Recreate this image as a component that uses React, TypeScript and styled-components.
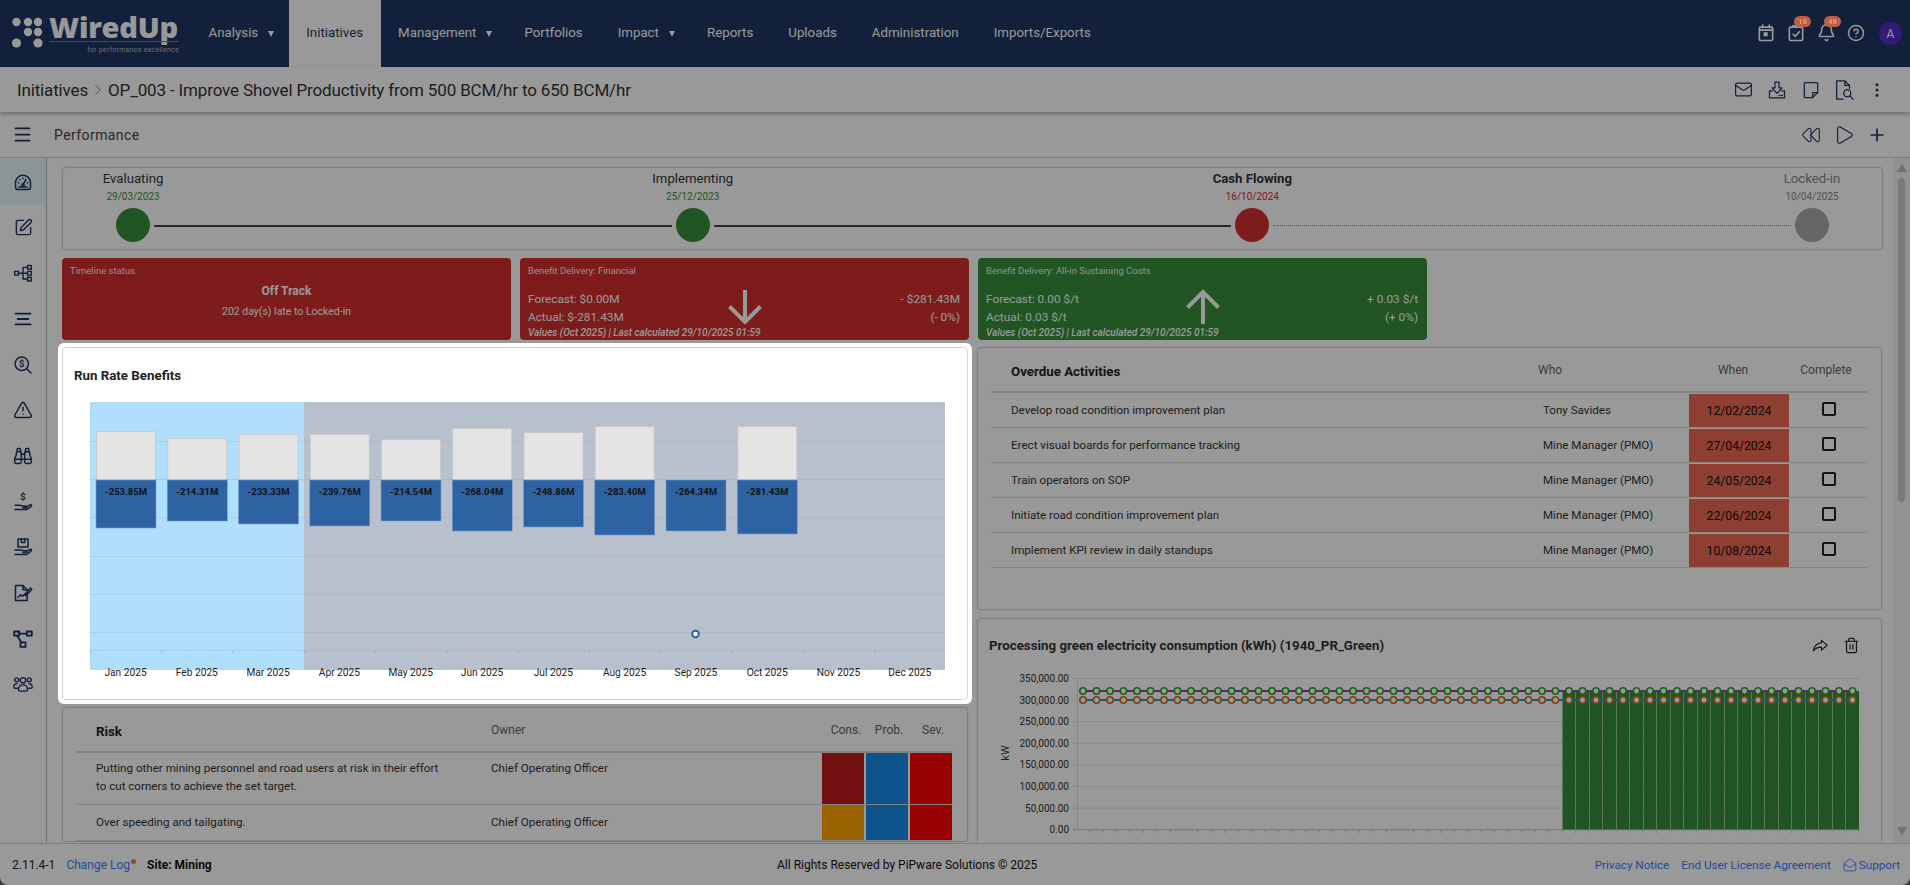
import React from 'react';
import styled, { createGlobalStyle } from 'styled-components';
import { Mail, EllipsisVertical, Rewind, Play, Plus, Trash2, MailOpen, Bell, CircleHelp, SquarePen, TriangleAlert, Binoculars, ChevronRight, Menu } from 'lucide-react';

const GlobalStyle = createGlobalStyle`
  html, body { margin: 0; padding: 0; height: 100%; background: #666; overflow: hidden; }
  body { font-family: Roboto, "Liberation Sans", sans-serif; font-size: 12px; color: #333; }
  #root { height: 100%; }
`;

const Page = styled.div`
  height: 885px; width: 1910px; display: flex; flex-direction: column; background: #fff;
  border-radius: 0 0 8px 8px; overflow: hidden;
`;
const Backdrop = styled.div`
  position: fixed; inset: 0; background: rgba(0, 0, 0, 0.4); z-index: 10;
`;

/* ---------- top navigation ---------- */
const Nav = styled.header`
  height: 67px; flex: none; display: flex; align-items: stretch; background: #1f3663;
`;
const Logo = styled.div`
  width: 191px; flex: none; display: flex; padding: 13px 0 0 11px; box-sizing: border-box; color: #fff;
`;
const LogoWords = styled.div`
  display: flex; flex-direction: column; align-items: flex-end; width: 130px; margin-left: 1px;
`;
const LogoWord = styled.div`
  font-family: "Open Sans", sans-serif; font-weight: 800; font-size: 29px; line-height: 27px; width: 100%; white-space: nowrap; letter-spacing: -.2px;
`;
const LogoRule = styled.div`
  width: 100%; height: 1px; background: #6d7fa3; margin-top: 1px;
`;
const LogoTag = styled.div`
  font-size: 7px; line-height: 9px; margin-top: 4px; color: #b6bccb; white-space: nowrap; letter-spacing: .25px;
`;
const NavItem = styled.div<{ $active?: boolean }>`
  display: flex; align-items: center; gap: 8px; padding: 0 17.5px 2px; font-size: 13.3px;
  background: ${p => (p.$active ? '#fff' : 'transparent')};
  color: ${p => (p.$active ? '#1f3663' : '#fff')};
`;
const Caret = styled.span`
  width: 0; height: 0; border-left: 3.5px solid transparent; border-right: 3.5px solid transparent; border-top: 6px solid #fff; margin: 2px -3px 0 2px;
`;
const NavRight = styled.div`
  margin-left: auto; display: flex; align-items: center; padding-right: 8px; color: #fff;
`;
const NavIconBox = styled.div`
  position: relative; width: 30px; height: 30px; display: flex; align-items: center; justify-content: center; margin-bottom: 2px;
`;
const Badge = styled.span`
  position: absolute; top: -2px; left: 13px; min-width: 17px; height: 11px; border-radius: 6px; background: #bd5f43; color: #e6b5a0;
  font-size: 8px; line-height: 11px; text-align: center; z-index: 20;
`;
const Avatar = styled.div`
  width: 23px; height: 23px; border-radius: 50%; background: #5a2bcc; color: #fff; font-size: 12px; display: flex; align-items: center; justify-content: center; margin-left: 8px; 
`;

/* ---------- title & tool bars ---------- */
const TitleBar = styled.div`
  height: 45px; flex: none; display: flex; align-items: center; padding: 0 16px 0 17px; font-size: 17px; color: #333;
  background: #fff; box-shadow: 0 2px 4px rgba(0,0,0,.3); position: relative;
`;
const Crumb = styled.span`
  display: flex; align-items: center; white-space: nowrap; letter-spacing: -.15px;
`;
const Sep = styled.span`
  display: flex; margin: 0 1px; color: #777;
`;
const IconGroup = styled.div`
  margin-left: auto; display: flex; align-items: center; color: #1f3663;
`;
const IconBox = styled.div`
  width: 33.4px; display: flex; align-items: center; justify-content: center;
`;
const ToolBar = styled.div`
  height: 46px; flex: none; display: flex; align-items: center; padding: 0 16px 0 0; box-sizing: border-box; border-bottom: 1px solid #ccc; color: #1f3663;
`;
const Burger = styled.div`
  width: 44px; flex: none; display: flex; justify-content: center; 
`;
const ToolTitle = styled.div`
  font-size: 14px; margin-left: 10px; color: #444; letter-spacing: .03em;
`;

/* ---------- body ---------- */
const Body = styled.div`
  flex: 1; min-height: 0; display: flex;
`;
const Sidebar = styled.nav`
  width: 46px; flex: none; border-right: 1px solid #bbb; padding-top: 1px; color: #1f3663;
`;
const SideItem = styled.div<{ $active?: boolean }>`
  height: 45.7px; display: flex; align-items: center; justify-content: center;
  background: ${p => (p.$active ? '#e6fafa' : 'transparent')};
`;
const Scroll = styled.main`
  flex: 1; min-width: 0; overflow: hidden; padding: 9px 10px 0 15px;
`;
const Card = styled.section`
  background: #fff; border: 1px solid #d6d6d6; border-radius: 4px; box-sizing: border-box; box-shadow: 0 0 2px rgba(0,0,0,.12);
`;
const StepperCard = styled(Card)`
  height: 83px; padding: 3px 53px 0; display: flex;
`;
const Step = styled.div`
  width: 34px; flex: none; display: flex; flex-direction: column; align-items: center;
`;
const StepLabel = styled.div<{ $tone: 'normal' | 'strong' | 'muted' }>`
  font-size: 13.2px; line-height: 16px; white-space: nowrap;
  font-weight: ${p => (p.$tone === 'strong' ? 700 : 400)};
  color: ${p => (p.$tone === 'muted' ? '#888' : '#333')};
`;
const StepDate = styled.div<{ $color: string }>`
  font-size: 10px; line-height: 14px; margin-top: 3px; white-space: nowrap; color: ${p => p.$color};
`;
const StepDot = styled.div<{ $color: string }>`
  width: 34px; height: 34px; border-radius: 50%; margin-top: 4px; flex: none; background: ${p => p.$color};
`;
const Connector = styled.div<{ $pending?: boolean }>`
  flex: 1; align-self: flex-start; margin: 54px 4px 0;
  border-top: ${p => (p.$pending ? '1px dotted #888' : '2px solid #444')};
`;
const Columns = styled.div`
  display: grid; grid-template-columns: 906px 905px; column-gap: 9px; margin-top: 7px;
`;
const Column = styled.div<{ $gap: number }>`
  display: flex; flex-direction: column; gap: ${p => p.$gap}px; min-width: 0;
`;
const StatusRow = styled.div`
  display: grid; grid-template-columns: repeat(3, 449px); column-gap: 9px; height: 82px; margin-top: 8px;
`;
const Status = styled.div<{ $bg: string }>`
  position: relative; border-radius: 4px; background: ${p => p.$bg}; color: #fff; height: 82px; padding: 6px 8px 0; box-sizing: border-box; display: flex; flex-direction: column;
`;
const StatusTitle = styled.div`
  font-size: 9.5px; line-height: 12px; margin-top: 1px; color: #eee;
`;
const StatusBig = styled.div`
  font-size: 12px; line-height: 18px; font-weight: 700; text-align: center; margin-top: 5px;
`;
const StatusText = styled.div`
  font-size: 10.5px; line-height: 18px; text-align: center; margin-top: 3px;
`;
const Metrics = styled.div`
  display: flex; justify-content: space-between; margin-top: 13px; font-size: 11.8px; line-height: 18px; padding-right: 1px;
`;
const MetricRight = styled.div`
  text-align: right; 
`;
const StatusArrow = styled.div`
  position: absolute; left: 50%; top: 31px; transform: translateX(-50%); display: flex;
`;
const StatusNote = styled.div`
  font-size: 10px; line-height: 12px; font-style: italic; font-weight: 500; margin-top: 1px; 
`;

/* highlighted card */
const Spotlight = styled.div`
  position: relative; z-index: 20; margin: -4px; padding: 4px; background: #fff; border-radius: 6px;
`;
const ChartCard = styled(Card)`
  padding: 20px 0 4px; box-shadow: none; 
`;
const ChartTitle = styled.h3`
  margin: 0; padding-left: 11px; font-size: 13.3px; line-height: 16px; font-weight: 700; color: #222;
`;
const ChartSvg = styled.svg`
  display: block; margin-top: 11px; font-family: Roboto, sans-serif;
`;

/* tables */
const TableRow = styled.div<{ $cols: string; $h: number; $head?: boolean }>`
  display: grid; grid-template-columns: ${p => p.$cols}; height: ${p => p.$h}px; box-sizing: border-box;
  border-bottom: ${p => (p.$head ? '2px solid #ddd' : '1px solid #ddd')}; font-size: 11.6px;
`;
const TableCard = styled(Card)<{ $pb: number }>`
  padding: 0 14px ${p => p.$pb}px 13px;
`;
const Cell = styled.div<{ $pl?: number; $pt?: number }>`
  padding-left: ${p => p.$pl ?? 20}px; padding-top: ${p => p.$pt ?? 0}px; line-height: 18px; color: #333; min-width: 0;
`;
const RowCell = styled(Cell)`
  display: flex; align-items: center; white-space: nowrap;
`;
const HeadTitle = styled.div`
  padding: 3px 0 0 20px; display: flex; align-items: center; font-size: 13.3px; font-weight: 700; color: #222;
`;
const HeadCell = styled.div<{ $pl?: number; $center?: boolean; $dx?: number }>`
  display: flex; align-items: center; font-size: 12px; color: #666; padding-left: ${p => p.$pl ?? 0}px;
  justify-content: ${p => (p.$center ? 'center' : 'flex-start')};
  transform: translateX(${p => p.$dx ?? 0}px);
`;
const WhenCell = styled.div`
  background: #ed6a52; color: #111; display: flex; align-items: center; justify-content: center; margin-top: 1px; font-size: 12.2px;
`;
const CheckCell = styled.div`
  display: flex; align-items: center; justify-content: center; padding-left: 2px; padding-bottom: 2px;
`;
const Check = styled.span`
  width: 10px; height: 10px; border: 2px solid #222; border-radius: 2px; display: block;
`;
const RiskColor = styled.div<{ $bg: string }>`
  background: ${p => p.$bg}; margin: 0 1px; 
`;
const ProcessCard = styled(Card)`
  padding-top: 19px; height: 300px; overflow: hidden;
`;
const ProcessHead = styled.div`
  display: flex; align-items: center; justify-content: space-between; padding: 0 21px 0 11px; height: 16px;
`;
const ProcessTitle = styled.h3`
  margin: 0; font-size: 13.3px; line-height: 16px; font-weight: 700; color: #333;
`;
const ProcessActions = styled.div`
  display: flex; gap: 14px; color: #222;
`;
const ProcessSvg = styled.svg`
  display: block; margin-top: 6px; font-family: Roboto, sans-serif;
`;

/* scrollbar */
const ScrollRail = styled.div`
  width: 17px; flex: none; display: flex; flex-direction: column; align-items: center; background: #f4f4f4; padding: 6px 0 6px;
  box-sizing: border-box;
`;
const RailUp = styled.span`
  border-left: 5px solid transparent; border-right: 5px solid transparent; border-bottom: 8px solid #bbb; 
`;
const RailDown = styled.span`
  border-left: 5px solid transparent; border-right: 5px solid transparent; border-top: 8px solid #bbb; margin-top: auto; margin-bottom: 2px;
`;
const RailThumb = styled.div`
  width: 7px; height: 324px; margin-top: 6px; border-radius: 4px; background: #ccc;
`;

/* footer */
const Footer = styled.footer`
  height: 42px; flex: none; display: flex; align-items: center; border-top: 1px solid #d4d4d4; box-sizing: border-box; padding: 0 10px 0 12px; font-size: 12px; color: #111;
`;
const FooterLeft = styled.div`
  width: 765px; flex: none; display: flex; align-items: center; 
`;
const FooterRight = styled.div`
  margin-left: auto; display: flex; align-items: center; gap: 12px; font-size: 11.7px;
`;
const FootLink = styled.span`
  color: #3f7aff; display: inline-flex; align-items: center; gap: 2px; white-space: nowrap;
`;
const Version = styled.span`
  margin-right: 11px; color: #222;
`;
const Dot = styled.span`
  width: 5px; height: 5px; border-radius: 50%; background: #ff7a50; margin: -6px 11px 0 1px;
`;
const Site = styled.strong`
  font-weight: 700;
`;

/* ---------- icons ---------- */
const sv = { fill: 'none', stroke: 'currentColor', strokeLinecap: 'round' as const, strokeLinejoin: 'round' as const };
const S: React.FC<{ size?: number; w?: number; children: React.ReactNode }> = ({ size = 20, w = 1.8, children }) => (
  <svg width={size} height={size} viewBox="0 0 24 24" strokeWidth={w} {...sv}>{children}</svg>
);
const LogoMark = () => (
  <svg width="37" height="44" viewBox="0 0 37 44" style={{ flex: 'none' }} fill="#fff">
    {[[5.5, 9], [17, 9], [27, 9], [17, 19], [27, 19], [5.5, 30], [27, 30]].map(([cx, cy], i) => (
      <circle key={i} cx={cx} cy={cy} r={i === 5 || i === 6 ? 4.6 : 4.2} />
    ))}
  </svg>
);
const IconGauge = () => (
  <S><path d="M3 13a9 9 0 0 1 18 0v5a3 3 0 0 1-3 3H6a3 3 0 0 1-3-3z" /><path d="M12 15l3.5-6" /><circle cx="12" cy="15.5" r="1.4" /><path d="M6.5 13h.5M8 9.2h.3M12 7.5v.3M17.5 13h-.5M7 18h10" /></S>
);
const IconTree = () => (
  <S w={1.7}><rect x="2" y="10" width="4.5" height="4.5" /><rect x="17.5" y="3" width="4.5" height="4.5" /><rect x="17.5" y="10" width="4.5" height="4.5" /><rect x="17.5" y="17" width="4.5" height="4.5" /><path d="M6.5 12.2h11M12 5.2v14M12 5.2h5.5M12 19.2h5.5" /></S>
);
const IconLines = () => (
  <S w={2.2}><path d="M3 5.5h18M5.5 12h13M3 18.5h18" /></S>
);
const IconSearchDollar = () => (
  <S><circle cx="10.5" cy="10.5" r="8" /><path d="M16.5 16.5l5 5" /><text x="10.5" y="14.5" textAnchor="middle" fontSize="11" fill="currentColor" stroke="none" fontWeight="700">$</text></S>
);
const IconHandCoin = () => (
  <S><text x="12" y="9" textAnchor="middle" fontSize="11" fill="currentColor" stroke="none" fontWeight="700">$</text><path d="M2.5 16h5.5c2 0 3 1 5 1h3c1.2 0 1.2 2 0 2h-4M16.5 17.5l4-2c1.6-.6 2.4 1 1 2l-5 3.5H2.5" /></S>
);
const IconHandBox = () => (
  <S><rect x="6" y="2.5" width="12" height="9.5" /><path d="M10 2.5v4h4v-4" /><path d="M2.5 15.5h5.5c2 0 3 1 5 1h3c1.2 0 1.2 2 0 2h-4M16.5 17l4-2c1.6-.6 2.4 1 1 2l-5 4H2.5" /></S>
);
const IconFileChart = () => (
  <S><path d="M17 12v9H3V3h9l5 5v1M12 3v5h5" /><path d="M6 17l3-3 2.5 2 3-3" /><path d="M14 14l7-8 1.5 1.5-7 8z" /></S>
);
const IconNodes = () => (
  <S w={2.2}><rect x="1.5" y="3" width="6" height="5" /><rect x="16.5" y="3" width="6" height="5" /><rect x="9" y="16" width="6" height="5.5" /><path d="M7.5 5.5h9M5 8l5 8" /></S>
);
const IconUsers = () => (
  <S w={1.7}><circle cx="12" cy="7.5" r="3.2" /><circle cx="4.5" cy="7" r="2.4" /><circle cx="19.5" cy="7" r="2.4" /><path d="M6.5 19c0-3.5 2-6 5.5-6s5.5 2.5 5.5 6c0 1-1 1.5-2 1.5h-7c-1 0-2-.5-2-1.5zM5 11.5c-2.5 0-4 1.5-4 4 0 .8.5 1.5 1.5 1.5H5M19 11.5c2.5 0 4 1.5 4 4 0 .8-.5 1.5-1.5 1.5H19" /></S>
);
const IconCalendar = () => (
  <S w={2}><rect x="4" y="5" width="16" height="16" rx="1.5" /><path d="M8 2.5v3M16 2.5v3M4 8.5h16" /><rect x="9" y="11" width="5" height="5" fill="currentColor" stroke="none" /></S>
);
const IconTaskList = () => (
  <S w={2}><rect x="4" y="5" width="16" height="16" rx="1.5" /><path d="M8.5 13.5l2.5 2.5 5-5.5" /><path d="M8 3.5h8" /></S>
);
const IconTray = () => (
  <S w={1.5}><path d="M9.5 2.5h5v7h3.5L12 16 6 9.5h3.5z" /><path d="M6.5 13H3v8.5h18V13h-3.5" /><path d="M14.5 18.5h1M17.5 18.5h1" /></S>
);
const IconNote = () => (
  <S w={1.5}><path d="M5 3h14a1 1 0 0 1 1 1v11l-6 6H5a1 1 0 0 1-1-1V4a1 1 0 0 1 1-1z" /><path d="M14 21v-6h6" /></S>
);
const IconFileFind = () => (
  <S size={22} w={1.4}><path d="M11 22H4V2h9l5 5v3M13 2v5h5" /><circle cx="15.5" cy="15.5" r="3.8" /><path d="M18.5 18.5l3.5 3.5" /></S>
);
const IconShare = () => (
  <S size={18} w={1.4}><path d="M14 4.5l7.5 6.5-7.5 6.5v-4c-5 0-8 1-11 5 1-6 4-10 11-11z" /></S>
);
const BigArrow: React.FC<{ up?: boolean }> = ({ up }) => (
  <svg width="36" height="36" viewBox="0 0 36 36" fill="none" stroke="#fff" strokeWidth="4" style={up ? { transform: 'rotate(180deg)' } : undefined}>
    <path d="M18 1v31M2.5 17.5L18 33 33.5 17.5" />
  </svg>
);

/* ---------- data ---------- */
const navItems: { label: string; caret?: boolean; active?: boolean }[] = [
  { label: 'Analysis', caret: true },
  { label: 'Initiatives', active: true },
  { label: 'Management', caret: true },
  { label: 'Portfolios' },
  { label: 'Impact', caret: true },
  { label: 'Reports' },
  { label: 'Uploads' },
  { label: 'Administration' },
  { label: 'Imports/Exports' },
];
const sideIcons: React.ReactNode[] = [
  <IconGauge />, <SquarePen size={19} strokeWidth={1.8} />, <IconTree />, <IconLines />, <IconSearchDollar />,
  <TriangleAlert size={20} strokeWidth={1.8} />, <Binoculars size={20} strokeWidth={1.8} />, <IconHandCoin />, <IconHandBox />, <IconFileChart />, <IconNodes />, <IconUsers />,
];
const months = ['Jan', 'Feb', 'Mar', 'Apr', 'May', 'Jun', 'Jul', 'Aug', 'Sep', 'Oct', 'Nov', 'Dec'];
const bars = [
  { top: 431, bottom: 528, label: '-253.85M' },
  { top: 438, bottom: 521, label: '-214.31M' },
  { top: 434, bottom: 524, label: '-233.33M' },
  { top: 434, bottom: 526, label: '-239.76M' },
  { top: 439, bottom: 521, label: '-214.54M' },
  { top: 428, bottom: 531, label: '-268.04M' },
  { top: 432, bottom: 527, label: '-248.86M' },
  { top: 426, bottom: 535, label: '-283.40M' },
  { top: 479, bottom: 531, label: '-264.34M' },
  { top: 426, bottom: 534, label: '-281.43M' },
];
const activities = [
  ['Develop road condition improvement plan', 'Tony Savides', '12/02/2024'],
  ['Erect visual boards for performance tracking', 'Mine Manager (PMO)', '27/04/2024'],
  ['Train operators on SOP', 'Mine Manager (PMO)', '24/05/2024'],
  ['Initiate road condition improvement plan', 'Mine Manager (PMO)', '22/06/2024'],
  ['Implement KPI review in daily standups', 'Mine Manager (PMO)', '10/08/2024'],
];
const ACT_COLS = '539px 159px 100px 78px';
const RISK_COLS = '408px 337px 44px 44px 44px';

const RunRateChart = () => {
  const grid = [441, 479, 517, 556, 594, 632, 650];
  return (
    <ChartSvg width="904" height="300" viewBox="63 395 904 300">
      <rect x="90" y="402" width="855" height="268" fill="#b9c0cd" />
      <rect x="90" y="402" width="214" height="268" fill="#b0dffd" />
      {grid.map(y => <line key={y} x1="87" x2="945" y1={y + 0.5} y2={y + 0.5} stroke="#7f93b3" strokeOpacity=".22" />)}
      {months.map((_, i) => <line key={i} x1={90.5 + i * 71.3} x2={90.5 + i * 71.3} y1="650" y2="654" stroke="#7f93b3" strokeOpacity=".35" />)}
      {bars.map((b, i) => {
        const x = 96 + i * 71.25;
        return (
          <g key={b.label}>
            {b.top < 479 && <rect x={x + 0.5} y={b.top + 0.5} width="59" height={479 - b.top} fill="#e4e4e4" stroke="#c9c9c9" />}
            <rect x={x} y="480" width="60" height={b.bottom - 480} fill="#2d63a3" stroke="#7e9fc6" strokeWidth=".6" />
            <text x={x + 30} y="494.5" textAnchor="middle" fontSize="9.5" fontWeight="700" fill="#111">{b.label}</text>
          </g>
        );
      })}
      <circle cx="695.5" cy="634" r="3.3" fill="#fff" stroke="#2d63a3" strokeWidth="2" />
      {months.map((m, i) => (
        <text key={m} x={125.5 + i * 71.3} y="676" textAnchor="middle" fontSize="10.2" fill="#222">{m} 2025</text>
      ))}
    </ChartSvg>
  );
};

const ProcessChart = () => {
  const ticks = ['350,000.00', '300,000.00', '250,000.00', '200,000.00', '150,000.00', '100,000.00', '50,000.00', '0.00'];
  const pts = Array.from({ length: 58 }, (_, i) => 1083 + i * 13.5);
  return (
    <ProcessSvg width="903" height="260" viewBox="978 660 903 260">
      {ticks.map((t, i) => {
        const y = 678.5 + i * 21.6;
        return (
          <g key={t}>
            <line x1="1073" x2="1860" y1={y} y2={y} stroke={i === 7 ? '#c4c4c4' : '#e4e4e4'} />
            <text x="1069" y={y + 3.5} textAnchor="end" fontSize="10" fill="#333">{t}</text>
          </g>
        );
      })}
      <line x1="1077.5" x2="1077.5" y1="678" y2="830" stroke="#e0e0e0" />
      <text transform="translate(1009 753) rotate(-90)" textAnchor="middle" fontSize="11" fill="#333">kW</text>
      {pts.map((x, i) => i >= 36 && <rect key={x} x={x - 6.5} y="691" width="13" height="138.5" fill="#388e40" />)}
      <line x1="1083" x2="1853" y1="691" y2="691" stroke="#a33cb4" strokeWidth="2" />
      <line x1="1083" x2="1853" y1="700" y2="700" stroke="#2f8fd8" strokeWidth="2" />
      {pts.map(x => <circle key={x} cx={x} cy="691" r="3.2" fill="#fff" stroke="#2ba52b" strokeWidth="1.6" />)}
      {pts.map(x => <circle key={x} cx={x} cy="700" r="3.2" fill="#fff" stroke="#d96a1a" strokeWidth="1.6" />)}
      {pts.map((x, i) => (
        <g key={x}>
          <line x1={x + 6.5} x2={x + 6.5} y1="829" y2="833" stroke="#ccc" />
          <text transform={`translate(${x + 3} 845) rotate(-55)`} textAnchor="end" fontSize="10" fill="#333">{months[i % 12]} 2021</text>
        </g>
      ))}
    </ProcessSvg>
  );
};

export default function App() {
  return (
    <>
      <GlobalStyle />
      <Page>
        <Nav>
          <Logo>
            <LogoMark />
            <LogoWords>
              <LogoWord>WiredUp</LogoWord>
              <LogoRule />
              <LogoTag>for performance excellence</LogoTag>
            </LogoWords>
          </Logo>
          {navItems.map(n => (
            <NavItem key={n.label} $active={n.active}>{n.label}{n.caret && <Caret />}</NavItem>
          ))}
          <NavRight>
            <NavIconBox><IconCalendar /></NavIconBox>
            <NavIconBox><IconTaskList /><Badge>18</Badge></NavIconBox>
            <NavIconBox><Bell size={19} strokeWidth={2} /><Badge>48</Badge></NavIconBox>
            <NavIconBox><CircleHelp size={18} strokeWidth={2} /></NavIconBox>
            <Avatar>A</Avatar>
          </NavRight>
        </Nav>
        <TitleBar>
          <Crumb>Initiatives<Sep><ChevronRight size={18} strokeWidth={1.2} /></Sep>OP_003 - Improve Shovel Productivity from 500 BCM/hr to 650 BCM/hr</Crumb>
          <IconGroup>
            <IconBox><Mail size={19} strokeWidth={1.5} /></IconBox>
            <IconBox><IconTray /></IconBox>
            <IconBox><IconNote /></IconBox>
            <IconBox><IconFileFind /></IconBox>
            <IconBox><EllipsisVertical size={18} strokeWidth={2} /></IconBox>
          </IconGroup>
        </TitleBar>
        <ToolBar>
          <Burger><Menu size={21} strokeWidth={2} /></Burger>
          <ToolTitle>Performance</ToolTitle>
          <IconGroup>
            <IconBox><Rewind size={20} strokeWidth={1.3} /></IconBox>
            <IconBox><Play size={22} strokeWidth={1.3} /></IconBox>
            <IconBox><Plus size={20} strokeWidth={2} /></IconBox>
          </IconGroup>
        </ToolBar>
        <Body>
          <Sidebar>
            {sideIcons.map((ic, i) => <SideItem key={i} $active={i === 0}>{ic}</SideItem>)}
          </Sidebar>
          <Scroll>
            <StepperCard>
              <Step><StepLabel $tone="normal">Evaluating</StepLabel><StepDate $color="#3c8f3c">29/03/2023</StepDate><StepDot $color="#388e3c" /></Step>
              <Connector />
              <Step><StepLabel $tone="normal">Implementing</StepLabel><StepDate $color="#3c8f3c">25/12/2023</StepDate><StepDot $color="#388e3c" /></Step>
              <Connector />
              <Step><StepLabel $tone="strong">Cash Flowing</StepLabel><StepDate $color="#d32f2f">16/10/2024</StepDate><StepDot $color="#d32f2f" /></Step>
              <Connector $pending />
              <Step><StepLabel $tone="muted">Locked-in</StepLabel><StepDate $color="#888">10/04/2025</StepDate><StepDot $color="#aaa" /></Step>
            </StepperCard>
            <StatusRow>
              <Status $bg="#d32f2f">
                <StatusTitle>Timeline status</StatusTitle>
                <StatusBig>Off Track</StatusBig>
                <StatusText>202 day(s) late to Locked-in</StatusText>
              </Status>
              <Status $bg="#d32f2f">
                <StatusTitle>Benefit Delivery: Financial</StatusTitle>
                <Metrics>
                  <div>Forecast: $0.00M<br />Actual: $-281.43M</div>
                  <MetricRight>- $281.43M<br />(- 0%)</MetricRight>
                </Metrics>
                <StatusArrow><BigArrow /></StatusArrow>
                <StatusNote>Values (Oct 2025) | Last calculated 29/10/2025 01:59</StatusNote>
              </Status>
              <Status $bg="#388e3c">
                <StatusTitle>Benefit Delivery: All-in Sustaining Costs</StatusTitle>
                <Metrics>
                  <div>Forecast: 0.00 $/t<br />Actual: 0.03 $/t</div>
                  <MetricRight>+ 0.03 $/t<br />(+ 0%)</MetricRight>
                </Metrics>
                <StatusArrow><BigArrow up /></StatusArrow>
                <StatusNote>Values (Oct 2025) | Last calculated 29/10/2025 01:59</StatusNote>
              </Status>
            </StatusRow>
            <Columns>
              <Column $gap={7}>
                <Spotlight>
                  <ChartCard>
                    <ChartTitle>Run Rate Benefits</ChartTitle>
                    <RunRateChart />
                  </ChartCard>
                </Spotlight>
                <TableCard $pb={0}>
                  <TableRow $cols={RISK_COLS} $h={45} $head>
                    <HeadTitle>Risk</HeadTitle>
                    <HeadCell $pl={7}>Owner</HeadCell>
                    <HeadCell $center $dx={3}>Cons.</HeadCell>
                    <HeadCell $center $dx={2}>Prob.</HeadCell>
                    <HeadCell $center $dx={2}>Sev.</HeadCell>
                  </TableRow>
                  <TableRow $cols={RISK_COLS} $h={52}>
                    <Cell $pt={6}>Putting other mining personnel and road users at risk in their effort<br />to cut corners to achieve the set target.</Cell>
                    <Cell $pl={7} $pt={6}>Chief Operating Officer</Cell>
                    <RiskColor $bg="#bf191b" />
                    <RiskColor $bg="#198ae9" />
                    <RiskColor $bg="#ff0000" />
                  </TableRow>
                  <TableRow $cols={RISK_COLS} $h={36}>
                    <Cell $pt={8}>Over speeding and tailgating.</Cell>
                    <Cell $pl={7} $pt={8}>Chief Operating Officer</Cell>
                    <RiskColor $bg="#ffa500" />
                    <RiskColor $bg="#198ae9" />
                    <RiskColor $bg="#ff0000" />
                  </TableRow>
                </TableCard>
              </Column>
              <Column $gap={8}>
                <TableCard $pb={41}>
                  <TableRow $cols={ACT_COLS} $h={45} $head>
                    <HeadTitle>Overdue Activities</HeadTitle>
                    <HeadCell $pl={8}>Who</HeadCell>
                    <HeadCell $center $dx={-6}>When</HeadCell>
                    <HeadCell $center $dx={-2}>Complete</HeadCell>
                  </TableRow>
                  {activities.map(a => (
                    <TableRow key={a[0]} $cols={ACT_COLS} $h={35}>
                      <RowCell>{a[0]}</RowCell>
                      <RowCell $pl={13}>{a[1]}</RowCell>
                      <WhenCell>{a[2]}</WhenCell>
                      <CheckCell><Check /></CheckCell>
                    </TableRow>
                  ))}
                </TableCard>
                <ProcessCard>
                  <ProcessHead>
                    <ProcessTitle>Processing green electricity consumption (kWh) (1940_PR_Green)</ProcessTitle>
                    <ProcessActions>
                      <IconShare />
                      <Trash2 size={17} strokeWidth={1.7} />
                    </ProcessActions>
                  </ProcessHead>
                  <ProcessChart />
                </ProcessCard>
              </Column>
            </Columns>
          </Scroll>
          <ScrollRail>
            <RailUp />
            <RailThumb />
            <RailDown />
          </ScrollRail>
        </Body>
        <Footer>
          <FooterLeft>
            <Version>2.11.4-1</Version>
            <FootLink>Change Log</FootLink>
            <Dot />
            <Site>Site: Mining</Site>
          </FooterLeft>
          <span>All Rights Reserved by PiPware Solutions © 2025</span>
          <FooterRight>
            <FootLink>Privacy Notice</FootLink>
            <FootLink>End User License Agreement</FootLink>
            <FootLink><MailOpen size={14} strokeWidth={1.5} />Support</FootLink>
          </FooterRight>
        </Footer>
        <Backdrop />
      </Page>
    </>
  );
}
